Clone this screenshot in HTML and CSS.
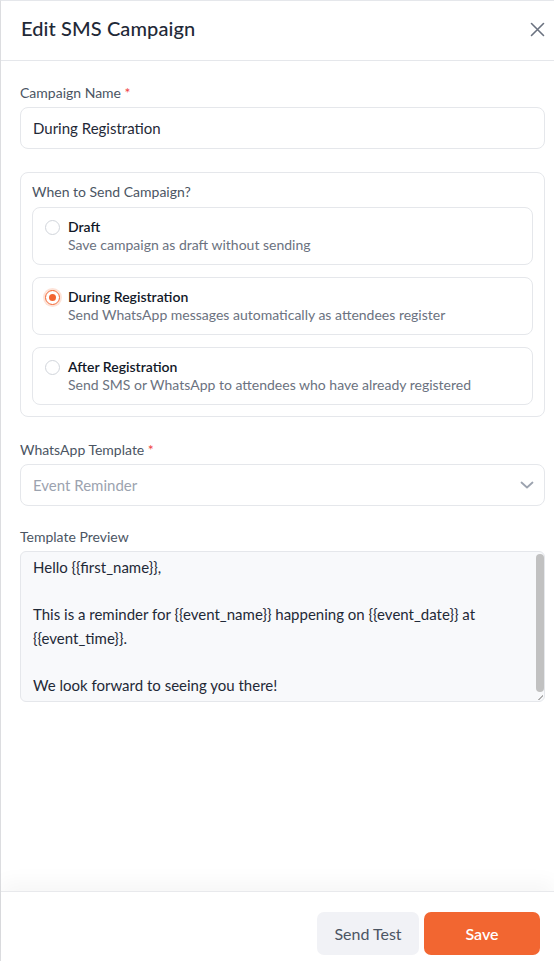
FILE: index.html
```html
<!DOCTYPE html>
<html>
<head>
<meta charset="utf-8">
<link rel="stylesheet" href="styles.css">
</head>
<body>
<div class="panel">
  <header class="header">
    <h1 class="title">Edit SMS Campaign</h1>
    <button class="close" aria-label="Close">
      <svg width="15" height="15" viewBox="0 0 15 15"><path d="M1.5 1.5 L13.5 13.5 M13.5 1.5 L1.5 13.5" stroke="#6b7280" stroke-width="1.6" stroke-linecap="round" fill="none"/></svg>
    </button>
  </header>
  <main class="body">
    <div class="field">
      <label class="label">Campaign Name <span class="req">*</span></label>
      <div class="input">During Registration</div>
    </div>
    <div class="fieldset">
      <div class="legend">When to Send Campaign?</div>
      <div class="options">
        <div class="option">
          <span class="radio"></span>
          <div class="opt-text">
            <div class="opt-title">Draft</div>
            <div class="opt-desc">Save campaign as draft without sending</div>
          </div>
        </div>
        <div class="option">
          <span class="radio checked"></span>
          <div class="opt-text">
            <div class="opt-title">During Registration</div>
            <div class="opt-desc">Send WhatsApp messages automatically as attendees register</div>
          </div>
        </div>
        <div class="option">
          <span class="radio"></span>
          <div class="opt-text">
            <div class="opt-title">After Registration</div>
            <div class="opt-desc">Send SMS or WhatsApp to attendees who have already registered</div>
          </div>
        </div>
      </div>
    </div>
    <div class="field">
      <label class="label">WhatsApp Template <span class="req">*</span></label>
      <div class="input select">
        <span class="placeholder">Event Reminder</span>
        <svg width="14" height="8" viewBox="0 0 14 8"><path d="M1.5 1.5 L7 6.5 L12.5 1.5" stroke="#9ca3af" stroke-width="1.8" stroke-linecap="round" stroke-linejoin="round" fill="none"/></svg>
      </div>
    </div>
    <div class="field field-preview">
      <label class="label">Template Preview</label>
      <div class="preview-wrap">
        <div class="preview">Hello {{first_name}},

This is a reminder for {{event_name}} happening on {{event_date}} at {{event_time}}.

We look forward to seeing you there!</div>
        <span class="scroll-thumb"></span>
        <span class="grip"></span>
      </div>
    </div>
  </main>
  <footer class="footer">
    <button class="btn btn-secondary">Send Test</button>
    <button class="btn btn-primary">Save</button>
  </footer>
</div>
</body>
</html>
```
FILE: styles.css
```css
* { box-sizing: border-box; }
html, body { margin: 0; padding: 0; }
body {
  width: 554px;
  height: 961px;
  overflow: hidden;
  background: #fff;
  font-family: "Lato", "Liberation Sans", sans-serif;
  color: #1f2937;
}
.panel {
  height: 961px;
  display: flex;
  flex-direction: column;
  border-left: 1px solid #dcdde0;
  border-top: 1px solid #e5e7eb;
}
.header {
  height: 60px;
  flex: none;
  display: flex;
  align-items: center;
  justify-content: space-between;
  padding: 0 9px 0 20px;
  border-bottom: 1px solid #e5e7eb;
}
.title {
  margin: 0;
  font-size: 20px;
  font-weight: 500;
  color: #1f2937;
  letter-spacing: 0.1px;
  margin-top: -6px;
}
.close {
  border: 0;
  background: none;
  padding: 0;
  width: 15px;
  height: 15px;
  display: flex;
  margin-top: -3px;
}
.body {
  flex: 1;
  display: flex;
  flex-direction: column;
  gap: 23px;
  padding: 22px 9px 0 19px;
}
.field { display: flex; flex-direction: column; gap: 4px; }
.field-preview { margin-top: -2px; }
.label {
  font-size: 14px;
  line-height: 20px;
  color: #4b5563;
}
.req { color: #ef4444; }
.input {
  height: 42px;
  border: 1px solid #e5e7eb;
  border-radius: 8px;
  display: flex;
  align-items: center;
  padding: 0 12px;
  font-size: 15px;
  color: #1f2937;
}
.select { justify-content: space-between; padding-right: 10px; }
.placeholder { color: #9ca3af; }
.fieldset {
  border: 1px solid #e5e7eb;
  border-radius: 8px;
  padding: 10px 11px 11px 11px;
  display: flex;
  flex-direction: column;
  gap: 6px;
}
.legend { font-size: 14px; line-height: 18px; color: #4b5563; }
.options { display: flex; flex-direction: column; gap: 12px; }
.option {
  border: 1px solid #e5e7eb;
  border-radius: 8px;
  padding: 10px 12px;
  display: flex;
  align-items: flex-start;
  gap: 8px;
}
.radio {
  flex: none;
  width: 15px;
  height: 15px;
  border-radius: 50%;
  border: 1px solid #d1d5db;
  margin-top: 2px;
  display: flex;
  align-items: center;
  justify-content: center;
}
.radio.checked {
  border-color: #f26430;
  box-shadow: 0 0 0 2px #fde3d8;
}
.radio.checked::after {
  content: "";
  width: 7px;
  height: 7px;
  border-radius: 50%;
  background: #f26430;
}
.opt-title { font-size: 14px; line-height: 18px; font-weight: 600; color: #111827; }
.opt-desc { font-size: 14px; line-height: 18px; color: #6b7280; }
.preview-wrap { position: relative; }
.preview {
  height: 151px;
  overflow: hidden;
  background: #f8f9fb;
  border: 1px solid #e5e7eb;
  border-radius: 6px;
  padding: 4px 24px 16px 12px;
  font-size: 15px;
  line-height: 23.6px;
  white-space: pre-wrap;
  color: #1f2937;
}
.scroll-thumb {
  position: absolute;
  right: 1px;
  top: 3px;
  width: 8px;
  height: 138px;
  border-radius: 4px;
  background: #c1c1c1;
}
.grip {
  position: absolute;
  right: 2px;
  bottom: 2px;
  width: 5px;
  height: 5px;
  background: linear-gradient(135deg, transparent 45%, #b0b0b0 45%, #b0b0b0 60%, transparent 60%);
}
.footer {
  flex: none;
  height: 70px;
  border-top: 1px solid #e8e9ec;
  box-shadow: 0 -10px 18px rgba(0, 0, 0, 0.035);
  display: flex;
  justify-content: flex-end;
  align-items: flex-start;
  gap: 5px;
  padding: 20px 14px 0 0;
}
.btn {
  height: 43px;
  border: 0;
  border-radius: 7px;
  font-family: inherit;
  font-size: 16px;
  cursor: pointer;
}
.btn-secondary {
  width: 102px;
  background: #f1f2f6;
  color: #4b5563;
}
.btn-primary {
  width: 116px;
  background: #f26631;
  color: #fff;
  font-weight: 600;
}
```
